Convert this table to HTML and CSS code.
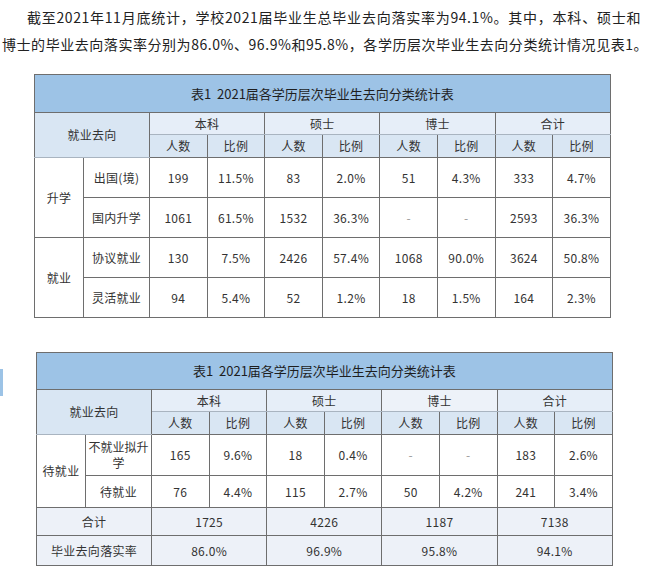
FILE: index.html
```html
<!DOCTYPE html>
<html lang="zh">
<head>
<meta charset="utf-8">
<link rel="stylesheet" href="styles.css">
</head>
<body>
<p class="intro"><span class="line first">截至2021年11月底统计，学校2021届毕业生总毕业去向落实率为94.1%。其中，本科、硕士和</span><span class="line">博士的毕业去向落实率分别为86.0%、96.9%和95.8%，各学历层次毕业生去向分类统计情况见表1。</span></p>

<div class="wrap wrap1">
<table class="stat">
  <colgroup>
    <col class="c1"><col class="c2"><col class="cn"><col class="cn"><col class="cn"><col class="cn"><col class="cn"><col class="cn"><col class="cn"><col class="cn">
  </colgroup>
  <tr class="title"><td colspan="10">表1&nbsp;&nbsp;2021届各学历层次毕业生去向分类统计表</td></tr>
  <tr class="h1">
    <td colspan="2" rowspan="2" class="hd">就业去向</td>
    <td colspan="2" class="hl">本科</td><td colspan="2" class="hl">硕士</td><td colspan="2" class="hl">博士</td><td colspan="2" class="hl">合计</td>
  </tr>
  <tr class="h2">
    <td>人数</td><td>比例</td><td>人数</td><td>比例</td><td>人数</td><td>比例</td><td>人数</td><td>比例</td>
  </tr>
  <tr class="r40"><td rowspan="2">升学</td><td>出国(境)</td><td>199</td><td>11.5%</td><td>83</td><td>2.0%</td><td>51</td><td class="soft">4.3%</td><td>333</td><td>4.7%</td></tr>
  <tr class="r40"><td>国内升学</td><td>1061</td><td>61.5%</td><td>1532</td><td>36.3%</td><td class="dash">-</td><td class="dash soft">-</td><td>2593</td><td>36.3%</td></tr>
  <tr class="r40"><td rowspan="2">就业</td><td>协议就业</td><td>130</td><td>7.5%</td><td>2426</td><td>57.4%</td><td>1068</td><td class="soft">90.0%</td><td>3624</td><td>50.8%</td></tr>
  <tr class="r40"><td>灵活就业</td><td>94</td><td>5.4%</td><td>52</td><td>1.2%</td><td>18</td><td class="soft">1.5%</td><td>164</td><td>2.3%</td></tr>
</table>
</div>

<div class="wrap wrap2">
<div class="mark"></div>
<table class="stat">
  <colgroup>
    <col class="c1"><col class="c2"><col class="cn"><col class="cn"><col class="cn"><col class="cn"><col class="cn"><col class="cn"><col class="cn"><col class="cn">
  </colgroup>
  <tr class="title t2"><td colspan="10">表1&nbsp;&nbsp;2021届各学历层次毕业生去向分类统计表</td></tr>
  <tr class="h1">
    <td colspan="2" rowspan="2" class="hd">就业去向</td>
    <td colspan="2" class="hl">本科</td><td colspan="2" class="hl">硕士</td><td colspan="2" class="hl hl2">博士</td><td colspan="2" class="hl">合计</td>
  </tr>
  <tr class="h2">
    <td>人数</td><td>比例</td><td>人数</td><td>比例</td><td>人数</td><td>比例</td><td>人数</td><td>比例</td>
  </tr>
  <tr class="r41"><td rowspan="2">待就业</td><td class="wrapcell">不就业拟升学</td><td>165</td><td>9.6%</td><td>18</td><td>0.4%</td><td class="dash">-</td><td class="dash soft">-</td><td>183</td><td>2.6%</td></tr>
  <tr class="r32"><td>待就业</td><td>76</td><td>4.4%</td><td>115</td><td>2.7%</td><td>50</td><td class="soft">4.2%</td><td>241</td><td>3.4%</td></tr>
  <tr class="sum r28"><td colspan="2">合计</td><td colspan="2">1725</td><td colspan="2">4226</td><td colspan="2">1187</td><td colspan="2">7138</td></tr>
  <tr class="sum r30"><td colspan="2">毕业去向落实率</td><td colspan="2">86.0%</td><td colspan="2">96.9%</td><td colspan="2">95.8%</td><td colspan="2">94.1%</td></tr>
</table>
</div>
</body>
</html>
```

FILE: styles.css
```css
html, body {
  margin: 0;
  padding: 0;
  background: #ffffff;
}
body {
  width: 647px;
  font-family: "Noto Sans CJK SC", "Noto Sans", sans-serif;
  color: #222222;
}
.intro {
  margin: 0;
  padding: 4px 0 0 2px;
  font-size: 14px;
  line-height: 27px;
  letter-spacing: 0.55px;
}
.intro .line {
  display: block;
  white-space: nowrap;
}
.intro .line.first {
  padding-left: 25px;
  padding-right: 6px;
  text-align: justify;
  text-align-last: justify;
  white-space: normal;
}
.wrap1 {
  margin-top: 16px;
  padding-left: 34px;
}
.wrap2 {
  margin-top: 34px;
  display: flex;
  align-items: flex-start;
  gap: 33px;
}
.mark {
  width: 3px;
  height: 27px;
  margin-top: 17px;
  background: #9cc3e6;
}
.stat {
  border-collapse: collapse;
  table-layout: fixed;
  width: 576px;
  font-size: 12px;
  color: #333333;
  letter-spacing: 0.3px;
}
.stat col.c1 { width: 49px; }
.stat col.c2 { width: 66px; }
.stat col.cn { width: 57.6px; }
.stat td {
  border: 1px solid #6e6e6e;
  text-align: center;
  vertical-align: middle;
  padding: 0 2px;
  line-height: 16px;
}
.stat td.soft {
  border-left: 1px solid #b8b8b8;
}
.stat td.dash { color: #999999; }
.title td {
  height: 37px;
  background: #9dc3e6;
  font-size: 13px;
  letter-spacing: 0;
  color: #1e1e1e;
  border-color: #6e6e6e;
}
.title.t2 td { height: 36px; }
.h1 td {
  height: 21px;
  background: #e6eef8;
  border-bottom-color: #a9b4c0;
}
.h1 td.hd {
  background: #d9e6f3;
}
.h1 td.hl2 { background: #edf2f9; }
.h2 td {
  height: 22px;
  background: #d9e6f3;
}
.r40 td { height: 39px; }
.r41 td { height: 40px; }
.r32 td { height: 31px; }
.r28 td { height: 27px; }
.r30 td { height: 29px; }
.sum td { background: #edf1f8; }
.wrapcell { line-height: 15px; letter-spacing: 0; }
```
